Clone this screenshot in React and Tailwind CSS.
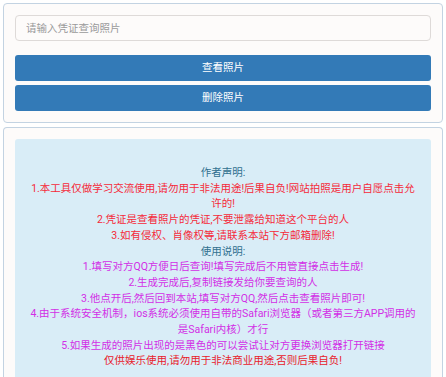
import { useState } from 'react';

// Notice lines shown in the info box. Colour per line.
const NOTICE = [
  { text: '作者声明:', color: 'text-[#31708f]' },
  { text: '1.本工具仅做学习交流使用,请勿用于非法用途!后果自负!网站拍照是用户自愿点击允许的!', color: 'text-[#f52a3a]' },
  { text: '2.凭证是查看照片的凭证,不要泄露给知道这个平台的人', color: 'text-[#f52a3a]' },
  { text: '3.如有侵权、肖像权等,请联系本站下方邮箱删除!', color: 'text-[#f52a3a]' },
  { text: '使用说明:', color: 'text-[#31708f]' },
  { text: '1.填写对方QQ方便日后查询!填写完成后不用管直接点击生成!', color: 'text-[#d22fe6]' },
  { text: '2.生成完成后,复制链接发给你要查询的人', color: 'text-[#d22fe6]' },
  { text: '3.他点开后,然后回到本站,填写对方QQ,然后点击查看照片即可!', color: 'text-[#d22fe6]' },
  { text: '4.由于系统安全机制，ios系统必须使用自带的Safari浏览器（或者第三方APP调用的是Safari内核）才行', color: 'text-[#d22fe6]' },
  { text: '5.如果生成的照片出现的是黑色的可以尝试让对方更换浏览器打开链接', color: 'text-[#d22fe6]' },
  { text: '仅供娱乐使用,请勿用于非法商业用途,否则后果自负!', color: 'text-[#e8202a]' },
];

export default function App() {
  const [code, setCode] = useState('');

  return (
    <div
      className="min-h-[377px] bg-white px-[3px] pt-[3px] flex flex-col gap-[4px]"
      style={{ fontFamily: "Roboto, 'Noto Sans CJK SC', sans-serif" }}
    >
      {/* ── Query panel ───────────────────────────────────────── */}
      <div className="border border-[#c3d3e2] rounded-[4px] bg-[#fdfbfa] px-[11px] pt-[11px] pb-[11px]">
        <input
          value={code}
          onChange={(e) => setCode(e.target.value)}
          placeholder="请输入凭证查询照片"
          className="block w-full h-[26px] px-[10px] text-[10.5px] text-[#555] placeholder:text-[#9a9a9a] bg-[#fdfbfa] border border-[#dedad8] rounded-[4px] outline-none"
        />
        <button className="mt-[14px] block w-full h-[26px] rounded-[3px] bg-[#337ab7] text-white text-[10.5px]">
          查看照片
        </button>
        <button className="mt-[4px] block w-full h-[26px] rounded-[3px] bg-[#337ab7] text-white text-[10.5px]">
          删除照片
        </button>
      </div>

      {/* ── Notice panel ──────────────────────────────────────── */}
      <div className="flex-1 border border-[#c3d3e2] border-b-0 rounded-t-[4px] bg-[#fdfbfa] px-[11px] pt-[11px]">
        <div className="bg-[#d9edf7] rounded-t-[3px] px-[15px] pt-[26px] pb-[20px] text-center text-[10.5px] leading-[15.7px]">
          {NOTICE.map((line, i) => (
            <div key={i} className={line.color}>
              {line.text}
            </div>
          ))}
        </div>
      </div>
    </div>
  );
}
